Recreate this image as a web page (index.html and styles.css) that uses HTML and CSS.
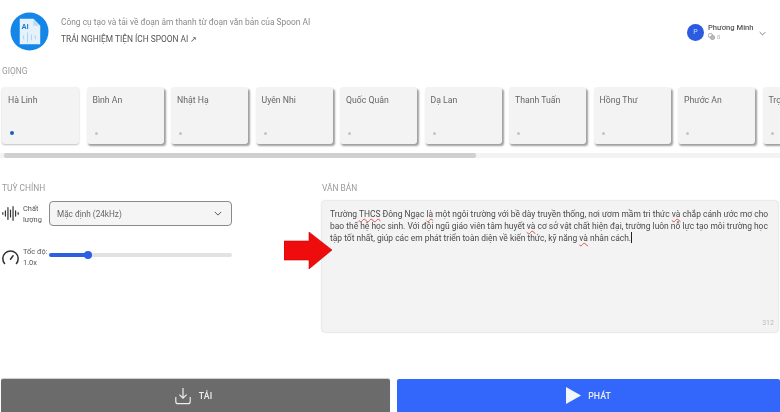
FILE: index.html
```html
<!DOCTYPE html>
<html lang="vi">
<head>
<meta charset="utf-8">
<title>Spoon AI</title>
<link rel="stylesheet" href="styles.css">
</head>
<body>
<div class="page">
  <header class="header">
    <svg class="logo" viewBox="0 0 40 40" width="39" height="39">
      <circle cx="20" cy="20" r="19.5" fill="#1486e8"/>
      <path d="M10 7H24L31 14V33H10Z" fill="#e6f2fb"/>
      <path d="M24 7L31 14H24Z" fill="#bcdcf5"/>
      <path d="M18 21V31M22 23V29M26 24V28M14 24V28" stroke="#a9d2f2" stroke-width="1" fill="none"/>
      <text x="12" y="17" class="logo-text">AI</text>
    </svg>
    <div class="intro">
      <p class="intro-sub">Công cụ tạo và tải về đoạn âm thanh từ đoạn văn bản của Spoon AI</p>
      <p class="intro-link">TRẢI NGHIỆM TIỆN ÍCH SPOON AI ↗</p>
    </div>
    <div class="user">
      <span class="avatar">P</span>
      <div class="user-info">
        <span class="user-name">Phương Minh</span>
        <span class="user-credit">
          <svg viewBox="0 0 10 10" width="7" height="7"><circle cx="3.5" cy="3.5" r="3" fill="none" stroke="#999" stroke-width="1.2"/><circle cx="6.5" cy="6.5" r="3" fill="#bbb" stroke="#999" stroke-width="1"/></svg>
          0
        </span>
      </div>
      <svg class="user-caret" viewBox="0 0 10 6" width="7" height="5"><path d="M1 1L5 5L9 1" fill="none" stroke="#666" stroke-width="1.2"/></svg>
    </div>
  </header>

  <h2 class="label voice-label">GIỌNG</h2>
  <div class="voices">
    <div class="voice"><span class="voice-name">Hà Linh</span><i class="dot dot-on"></i></div>
    <div class="voice"><span class="voice-name">Bình An</span><i class="dot"></i></div>
    <div class="voice"><span class="voice-name">Nhật Hạ</span><i class="dot"></i></div>
    <div class="voice"><span class="voice-name">Uyên Nhi</span><i class="dot"></i></div>
    <div class="voice"><span class="voice-name">Quốc Quân</span><i class="dot"></i></div>
    <div class="voice"><span class="voice-name">Dạ Lan</span><i class="dot"></i></div>
    <div class="voice"><span class="voice-name">Thanh Tuấn</span><i class="dot"></i></div>
    <div class="voice"><span class="voice-name">Hồng Thư</span><i class="dot"></i></div>
    <div class="voice"><span class="voice-name">Phước An</span><i class="dot"></i></div>
    <div class="voice"><span class="voice-name">Trọng</span><i class="dot"></i></div>
  </div>
  <div class="scroll"><div class="scroll-thumb"></div></div>

  <main class="panels">
    <section class="settings">
      <h2 class="label">TUỲ CHỈNH</h2>
      <div class="row row-quality">
        <svg class="row-icon" viewBox="0 0 20 20" width="17" height="17"><path d="M1 9V11M4 7V13M7 3V17M10 6V14M13 2V18M16 7V13M19 9V11" stroke="#333" stroke-width="1.4" stroke-linecap="round" fill="none"/></svg>
        <span class="row-text">Chất<br>lượng</span>
        <div class="select"><span>Mặc định (24kHz)</span>
          <svg viewBox="0 0 10 6" width="8" height="5"><path d="M1 1L5 5L9 1" fill="none" stroke="#555" stroke-width="1.2"/></svg>
        </div>
      </div>
      <div class="row row-speed">
        <svg class="row-icon" viewBox="0 0 20 20" width="17" height="17"><path d="M3 17A9 9 0 1 1 17 17M10 12L13 8" stroke="#333" stroke-width="1.8" stroke-linecap="round" fill="none"/></svg>
        <span class="row-text">Tốc độ:<br>1.0x</span>
        <div class="slider"><div class="slider-fill"></div><div class="slider-knob"></div></div>
      </div>
    </section>
    <section class="editor">
      <h2 class="label">VĂN BẢN</h2>
      <div class="textbox">
        <p class="textbox-text">Trường <u>THCS</u> Đông Ngạc <u>là</u> một ngôi trường với bề dày truyền thống, nơi ươm mầm tri thức <u>và</u> chắp cánh ước mơ cho bao thế hệ học sinh. Với đội ngũ giáo viên tâm huyết <u>và</u> cơ sở vật chất hiện đại, trường luôn nỗ lực tạo môi trường học tập tốt nhất, giúp các em phát triển toàn diện về kiến thức, kỹ năng <u>và</u> nhân cách.<b class="caret"></b></p>
        <span class="count">312</span>
      </div>
    </section>
    <svg class="arrow" viewBox="0 0 48 37" width="48" height="37"><path d="M0 9H25V0L48 18L25 37V28H0Z" fill="#ee0c0c" stroke="#c00" stroke-width=".6"/></svg>
  </main>

  <footer class="actions">
    <button class="action action-download">
      <svg viewBox="0 0 20 20" width="18" height="18"><path d="M10 1V12M6 8.5L10 12.5L14 8.5M2 11V16A2.5 2.5 0 0 0 4.5 18.5H15.5A2.5 2.5 0 0 0 18 16V11" fill="none" stroke="#eee" stroke-width="1.3"/></svg>
      TẢI
    </button>
    <button class="action action-play">
      <svg viewBox="0 0 16 18" width="15" height="17"><path d="M0 0L16 9L0 18Z" fill="#f2f6ff"/></svg>
      PHÁT
    </button>
  </footer>
</div>
</body>
</html>
```
FILE: styles.css
```css
* { box-sizing: border-box; }
html, body { margin: 0; padding: 0; background: #fff; }
body { font-family: Roboto, "Open Sans", sans-serif; color: #444; }
.page { width: 780px; height: 412px; display: flex; flex-direction: column; overflow: hidden; filter: blur(.45px); }
p, h2 { margin: 0; }

.header { height: 61px; padding: 12px 14px 0 10px; display: flex; align-items: flex-start; flex: none; }
.logo { flex: none; }
.logo-text { font: 700 7px "Open Sans", sans-serif; fill: #1e78d2; }
.intro { margin-left: 12px; padding-top: 4px; }
.intro-sub { font-size: 8.4px; line-height: 12px; color: #8a8a8a; }
.intro-link { font-size: 8.4px; line-height: 12px; margin-top: 5px; color: #555; }
.user { margin-left: auto; margin-top: 11px; display: flex; align-items: center; }
.avatar { width: 17px; height: 17px; border-radius: 50%; background: #2a5be0; color: #cfdcff; font-size: 7px; display: flex; align-items: center; justify-content: center; }
.user-info { margin-left: 4px; display: flex; flex-direction: column; font-size: 7.6px; line-height: 9px; width: 51px; }
.user-name { color: #555; font-weight: 500; }
.user-credit { color: #aaa; font-size: 6px; display: flex; align-items: center; gap: 2px; }
.user-caret { margin-top: 2px; }

.label { font-size: 8.4px; line-height: 12px; font-weight: 400; color: #9a9a9a; }
.voice-label { margin: 4px 0 0 2px; flex: none; }
.voices { margin: 10px 0 0 2px; display: flex; gap: 7.5px; flex: none; }
.voice { flex: none; width: 77px; height: 57px; padding: 7px 6px; background: #f3f3f3; border-radius: 3px; box-shadow: 1.5px 2px 2px rgba(0,0,0,.38); display: flex; flex-direction: column; justify-content: space-between; }
.voice:first-child { box-shadow: 0 1px 2px rgba(0,0,0,.25); }
.voice-name { font-size: 8.7px; line-height: 12px; color: #666; white-space: nowrap; }
.dot { width: 3px; height: 3px; margin: 0 0 2px 2px; border-radius: 50%; background: #c4c4c4; }
.dot-on { background: #1f5fbf; width: 4px; height: 4px; }
.scroll { margin: 9px 0 0; height: 5px; background: #f3f3f3; padding-left: 4px; flex: none; }
.scroll-thumb { width: 472px; height: 100%; background: #d0d0d0; border-radius: 2px; }

.panels { position: relative; margin-top: 24px; padding: 0 2px; display: flex; gap: 90px; flex: none; }
.settings { width: 230px; flex: none; }
.editor { flex: 1; }
.row { display: flex; align-items: center; }
.row-quality { margin-top: 7px; }
.row-speed { margin-top: 20px; }
.row-icon { flex: none; }
.row-text { width: 24px; margin-left: 4px; font-size: 7.4px; line-height: 11px; color: #555; flex: none; white-space: nowrap; }
.select { flex: 1; height: 25px; margin-left: 2px; padding: 0 9px 0 7px; background: #f5f5f5; border: 1px solid #8a8a8a; border-radius: 4px; font-size: 8.2px; color: #666; display: flex; align-items: center; justify-content: space-between; }
.slider { position: relative; flex: 1; height: 4px; margin-left: 2px; background: #e2e2e2; border-radius: 2px; margin-top: -4px; }
.slider-fill { width: 38px; height: 100%; background: #2d5fe0; border-radius: 2px; }
.slider-knob { position: absolute; left: 35px; top: -2px; width: 8px; height: 8px; border-radius: 50%; background: #2d5fe0; }
.textbox { position: relative; height: 131px; margin-top: 7px; padding: 8px 6px 8px 8px; background: #f3f3f3; border-radius: 3px; box-shadow: 0 0 2px rgba(0,0,0,.3); }
.textbox-text { font-size: 8.45px; line-height: 11.6px; color: #4a4a4a; }
.textbox-text u { text-decoration: underline wavy #d9534f .6px; text-underline-offset: 1px; }
.caret { display: inline-block; width: 1px; height: 11px; background: #222; vertical-align: -2px; }
.count { position: absolute; right: 4px; bottom: 5px; font-size: 7px; color: #bbb; }
.arrow { position: absolute; left: 284px; top: 50px; }

.actions { margin-top: auto; height: 33px; padding-left: 1px; display: flex; gap: 7px; flex: none; }
.action { border: 0; border-radius: 2px 2px 0 0; color: #eee; font: 500 8.8px Roboto, sans-serif; display: flex; align-items: center; justify-content: center; gap: 7px; padding: 0; }
.action-download { width: 389px; padding-right: 5px; background: #6b6b6b; box-shadow: 0 -1px 1px rgba(0,0,0,.2); }
.action-play { flex: 1; background: #3366fb; }
```
